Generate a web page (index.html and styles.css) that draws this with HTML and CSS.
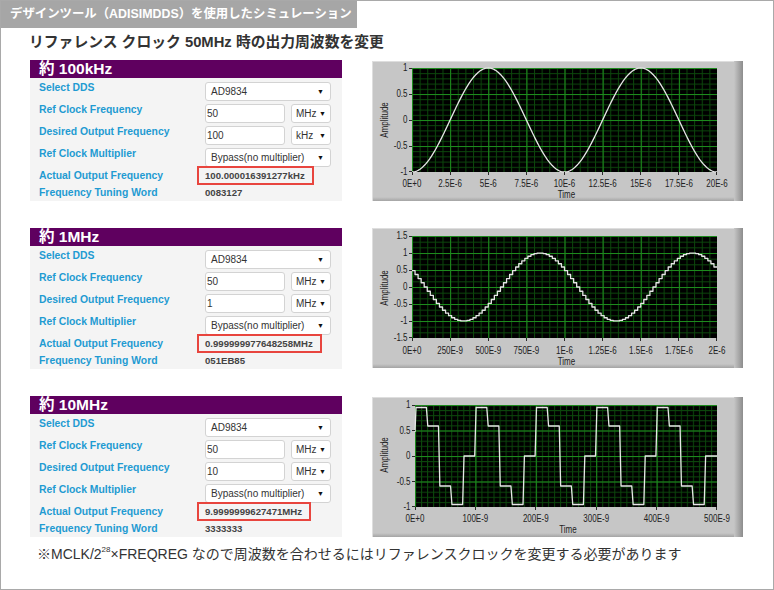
FILE: index.html
```html
<!DOCTYPE html>
<html lang="ja">
<head>
<meta charset="utf-8">
<title>ADISIMDDS シミュレーション</title>
<link rel="stylesheet" href="styles.css">
</head>
<body>
<div class="page">
  <div class="tab">デザインツール（ADISIMDDS）を使用したシミュレーション</div>
  <h1 class="title">リファレンス クロック 50MHz 時の出力周波数を変更</h1>

  <div class="sections">
    <!-- 100kHz -->
    <section class="sim">
      <div class="panel">
        <div class="panel-head">約 100kHz</div>
        <div class="panel-body">
          <div class="row">
            <span class="label">Select DDS</span>
            <div class="select wide"><span>AD9834</span><i class="arrow">▼</i></div>
          </div>
          <div class="row">
            <span class="label">Ref Clock Frequency</span>
            <div class="input">50</div>
            <div class="select unit"><span>MHz</span><i class="arrow">▼</i></div>
          </div>
          <div class="row">
            <span class="label">Desired Output Frequency</span>
            <div class="input">100</div>
            <div class="select unit"><span>kHz</span><i class="arrow">▼</i></div>
          </div>
          <div class="row">
            <span class="label">Ref Clock Multiplier</span>
            <div class="select wide"><span>Bypass(no multiplier)</span><i class="arrow">▼</i></div>
          </div>
          <div class="row result">
            <span class="label">Actual Output Frequency</span>
            <span class="value boxed">100.000016391277kHz</span>
          </div>
          <div class="row ftw">
            <span class="label">Frequency Tuning Word</span>
            <span class="value">0083127</span>
          </div>
        </div>
      </div>
      <div class="chart">
        <svg class="graph" width="371" height="140" viewBox="0 0 371 140">
          <defs>
            <linearGradient id="edge" x1="0" x2="1" y1="0" y2="0">
              <stop offset="0" stop-color="#c6c6c6"/>
              <stop offset="1" stop-color="#8d8d8d"/>
            </linearGradient>
            <linearGradient id="edgeB" x1="0" x2="0" y1="0" y2="1">
              <stop offset="0" stop-color="#c6c6c6"/>
              <stop offset="1" stop-color="#a4a4a4"/>
            </linearGradient>
            <pattern id="min1" x="40" y="7" width="7.625" height="5.2" patternUnits="userSpaceOnUse">
              <rect class="gmin" width="1" height="5.2"/><rect class="gmin" width="7.625" height="1"/>
            </pattern>
            <pattern id="maj1" x="40" y="7" width="38.125" height="26" patternUnits="userSpaceOnUse">
              <rect class="gmaj" width="1" height="26"/><rect class="gmaj" width="38.125" height="1"/>
            </pattern>
          </defs>
          <rect class="frame" width="371" height="140"/>
          <rect x="0" y="136" width="371" height="4" fill="url(#edgeB)"/>
          <rect x="362" y="0" width="9" height="140" fill="url(#edge)"/>
          <rect class="hl" width="362" height="1"/>
          <rect class="hl" width="1" height="140"/>
          <rect class="plotbg" x="40" y="7" width="305" height="104"/>
          <rect x="40" y="7" width="305" height="104" fill="url(#min1)"/>
          <rect x="40" y="7" width="305" height="104" fill="url(#maj1)"/>
          <path id="w1" class="wave" d="M40 111"/>
          <path class="tick" d="M37 7.5H40M37 33.5H40M37 59.5H40M37 85.5H40M37 110.5H40M40.5 111V114M78.5 111V114M116.5 111V114M154.5 111V114M192.5 111V114M230.5 111V114M268.5 111V114M306.5 111V114M344.5 111V114"/>
          <g class="ax yl">
            <text x="35.5" y="10.5">1</text>
            <text x="35.5" y="36.5">0.5</text>
            <text x="35.5" y="62.5">0</text>
            <text x="35.5" y="88.5">-0.5</text>
            <text x="35.5" y="114.5">-1</text>
          </g>
          <g class="ax xl">
            <text x="40" y="126">0E+0</text>
            <text x="78.1" y="126">2.5E-6</text>
            <text x="116.3" y="126">5E-6</text>
            <text x="154.4" y="126">7.5E-6</text>
            <text x="192.5" y="126">10E-6</text>
            <text x="230.6" y="126">12.5E-6</text>
            <text x="268.8" y="126">15E-6</text>
            <text x="306.9" y="126">17.5E-6</text>
            <text x="345" y="126">20E-6</text>
            <text x="194.5" y="137">Time</text>
          </g>
          <g class="ax xl" transform="translate(15.5 59) rotate(-90)"><text x="0" y="0">Amplitude</text></g>
        </svg>
      </div>
    </section>

    <!-- 1MHz -->
    <section class="sim">
      <div class="panel">
        <div class="panel-head">約 1MHz</div>
        <div class="panel-body">
          <div class="row">
            <span class="label">Select DDS</span>
            <div class="select wide"><span>AD9834</span><i class="arrow">▼</i></div>
          </div>
          <div class="row">
            <span class="label">Ref Clock Frequency</span>
            <div class="input">50</div>
            <div class="select unit"><span>MHz</span><i class="arrow">▼</i></div>
          </div>
          <div class="row">
            <span class="label">Desired Output Frequency</span>
            <div class="input">1</div>
            <div class="select unit"><span>MHz</span><i class="arrow">▼</i></div>
          </div>
          <div class="row">
            <span class="label">Ref Clock Multiplier</span>
            <div class="select wide"><span>Bypass(no multiplier)</span><i class="arrow">▼</i></div>
          </div>
          <div class="row result">
            <span class="label">Actual Output Frequency</span>
            <span class="value boxed">0.999999977648258MHz</span>
          </div>
          <div class="row ftw">
            <span class="label">Frequency Tuning Word</span>
            <span class="value">051EB85</span>
          </div>
        </div>
      </div>
      <div class="chart chart-mid">
        <svg class="graph" width="371" height="140" viewBox="0 0 371 140">
          <defs>
            <pattern id="min2" x="40" y="8" width="7.625" height="5.6667" patternUnits="userSpaceOnUse">
              <rect class="gmin" width="1" height="5.6667"/><rect class="gmin" width="7.625" height="1"/>
            </pattern>
            <pattern id="maj2" x="40" y="8" width="38.125" height="17" patternUnits="userSpaceOnUse">
              <rect class="gmaj" width="1" height="17"/><rect class="gmaj" width="38.125" height="1"/>
            </pattern>
          </defs>
          <rect class="frame" width="371" height="140"/>
          <rect x="0" y="136" width="371" height="4" fill="url(#edgeB)"/>
          <rect x="362" y="0" width="9" height="140" fill="url(#edge)"/>
          <rect class="hl" width="362" height="1"/>
          <rect class="hl" width="1" height="140"/>
          <rect class="plotbg" x="40" y="8" width="305" height="102"/>
          <rect x="40" y="8" width="305" height="102" fill="url(#min2)"/>
          <rect x="40" y="8" width="305" height="102" fill="url(#maj2)"/>
          <path id="w2" class="wave" d="M40 59"/>
          <path class="tick" d="M37 8.5H40M37 25.5H40M37 42.5H40M37 59.5H40M37 76.5H40M37 93.5H40M37 109.5H40M40.5 110V113M78.5 110V113M116.5 110V113M154.5 110V113M192.5 110V113M230.5 110V113M268.5 110V113M306.5 110V113M344.5 110V113"/>
          <g class="ax yl">
            <text x="35.5" y="11.5">1.5</text>
            <text x="35.5" y="28.5">1</text>
            <text x="35.5" y="45.5">0.5</text>
            <text x="35.5" y="62.5">0</text>
            <text x="35.5" y="79.5">-0.5</text>
            <text x="35.5" y="96.5">-1</text>
            <text x="35.5" y="113.5">-1.5</text>
          </g>
          <g class="ax xl">
            <text x="40" y="126.5">0E+0</text>
            <text x="78.1" y="126.5">250E-9</text>
            <text x="116.3" y="126.5">500E-9</text>
            <text x="154.4" y="126.5">750E-9</text>
            <text x="192.5" y="126.5">1E-6</text>
            <text x="230.6" y="126.5">1.25E-6</text>
            <text x="268.8" y="126.5">1.5E-6</text>
            <text x="306.9" y="126.5">1.75E-6</text>
            <text x="345" y="126.5">2E-6</text>
            <text x="194.5" y="137.5">Time</text>
          </g>
          <g class="ax xl" transform="translate(15.5 60) rotate(-90)"><text x="0" y="0">Amplitude</text></g>
        </svg>
      </div>
    </section>

    <!-- 10MHz -->
    <section class="sim">
      <div class="panel">
        <div class="panel-head">約 10MHz</div>
        <div class="panel-body">
          <div class="row">
            <span class="label">Select DDS</span>
            <div class="select wide"><span>AD9834</span><i class="arrow">▼</i></div>
          </div>
          <div class="row">
            <span class="label">Ref Clock Frequency</span>
            <div class="input">50</div>
            <div class="select unit"><span>MHz</span><i class="arrow">▼</i></div>
          </div>
          <div class="row">
            <span class="label">Desired Output Frequency</span>
            <div class="input">10</div>
            <div class="select unit"><span>MHz</span><i class="arrow">▼</i></div>
          </div>
          <div class="row">
            <span class="label">Ref Clock Multiplier</span>
            <div class="select wide"><span>Bypass(no multiplier)</span><i class="arrow">▼</i></div>
          </div>
          <div class="row result">
            <span class="label">Actual Output Frequency</span>
            <span class="value boxed">9.9999999627471MHz</span>
          </div>
          <div class="row ftw">
            <span class="label">Frequency Tuning Word</span>
            <span class="value">3333333</span>
          </div>
        </div>
      </div>
      <div class="chart">
        <svg class="graph" width="371" height="140" viewBox="0 0 371 140">
          <defs>
            <pattern id="min3" x="43" y="8" width="6.04" height="5.1" patternUnits="userSpaceOnUse">
              <rect class="gmin" width="1" height="5.1"/><rect class="gmin" width="6.04" height="1"/>
            </pattern>
            <pattern id="maj3" x="43" y="8" width="60.4" height="25.5" patternUnits="userSpaceOnUse">
              <rect class="gmaj" width="1" height="25.5"/><rect class="gmaj" width="60.4" height="1"/>
            </pattern>
          </defs>
          <rect class="frame" width="371" height="140"/>
          <rect x="0" y="136" width="371" height="4" fill="url(#edgeB)"/>
          <rect x="362" y="0" width="9" height="140" fill="url(#edge)"/>
          <rect class="hl" width="362" height="1"/>
          <rect class="hl" width="1" height="140"/>
          <rect class="plotbg" x="43" y="8" width="302" height="102"/>
          <rect x="43" y="8" width="302" height="102" fill="url(#min3)"/>
          <rect x="43" y="8" width="302" height="102" fill="url(#maj3)"/>
          <path id="w3" class="wave" d="M43 59"/>
          <path class="tick" d="M40 8.5H43M40 33.5H43M40 59.5H43M40 84.5H43M40 109.5H43M43.5 110V113M103.5 110V113M163.5 110V113M224.5 110V113M284.5 110V113M344.5 110V113"/>
          <g class="ax yl">
            <text x="38.5" y="11.5">1</text>
            <text x="38.5" y="37">0.5</text>
            <text x="38.5" y="62.5">0</text>
            <text x="38.5" y="88">-0.5</text>
            <text x="38.5" y="113.5">-1</text>
          </g>
          <g class="ax xl">
            <text x="43" y="125.5">0E+0</text>
            <text x="103.4" y="125.5">100E-9</text>
            <text x="163.8" y="125.5">200E-9</text>
            <text x="224.2" y="125.5">300E-9</text>
            <text x="284.6" y="125.5">400E-9</text>
            <text x="345" y="125.5">500E-9</text>
            <text x="196" y="136.5">Time</text>
          </g>
          <g class="ax xl" transform="translate(15.5 58) rotate(-90)"><text x="0" y="0">Amplitude</text></g>
        </svg>
      </div>
    </section>
  </div>

  <p class="note">※MCLK/2<sup>28</sup>×FREQREG なので周波数を合わせるにはリファレンスクロックを変更する必要があります</p>
</div>
<script src="script.js"></script>
</body>
</html>
```

FILE: styles.css
```css
* {
  box-sizing: border-box;
}

html,
body {
  margin: 0;
  padding: 0;
  background: #ffffff;
}

body {
  font-family: "Liberation Sans", "Noto Sans CJK JP", sans-serif;
  color: #333333;
}

.page {
  width: 774px;
  height: 590px;
  border: 1px solid #a9a9a9;
  overflow: hidden;
}

.tab {
  width: 357px;
  height: 28px;
  margin: -1px 0 0 -1px;
  padding-left: 10px;
  background: #a6a6a6;
  color: #ffffff;
  font-size: 12.4px;
  font-weight: bold;
  line-height: 28px;
  white-space: nowrap;
}

.title {
  margin: 5px 0 0 28px;
  font-size: 14.8px;
  line-height: 18px;
  font-weight: bold;
  color: #333333;
  white-space: nowrap;
}

.sections {
  display: flex;
  flex-direction: column;
  gap: 27px;
  margin: 9px 0 0 29px;
}

.sim {
  display: flex;
  align-items: flex-start;
  gap: 30px;
}

.panel {
  width: 312px;
  flex: none;
}

.panel-head {
  height: 18px;
  padding-left: 9px;
  background: #5f005f;
  color: #ffffff;
  font-size: 15.5px;
  font-weight: bold;
  line-height: 18px;
  white-space: nowrap;
}

.panel-body {
  background: #f4f4f4;
  padding: 4px 0 2px 9px;
}

.row {
  display: flex;
  align-items: flex-start;
  height: 22px;
}

.row.result {
  height: 17px;
}

.row.ftw {
  height: 12px;
}

.label {
  width: 166px;
  flex: none;
  color: #1f9bd2;
  font-size: 10.4px;
  font-weight: bold;
  line-height: 12px;
  white-space: nowrap;
}

.select,
.input {
  height: 19px;
  display: flex;
  align-items: center;
  background: #ffffff;
  border: 1px solid #d3d3d3;
  border-radius: 3px;
  color: #333333;
  font-size: 10px;
  white-space: nowrap;
}

.select {
  justify-content: space-between;
}

.select.wide {
  width: 126px;
  padding: 0 6px 0 5px;
}

.input {
  width: 80px;
  padding-left: 1px;
}

.select.unit {
  width: 40px;
  margin-left: 6px;
  padding: 0 4px 0 4px;
}

.arrow {
  font-style: normal;
  font-size: 7px;
  color: #111111;
}

.value {
  color: #444444;
  font-size: 9.6px;
  font-weight: bold;
  line-height: 12px;
  white-space: nowrap;
}

.value.boxed {
  height: 19px;
  margin: -4px 0 0 -8px;
  padding: 0 7px 0 6px;
  border: 2px solid #e8453e;
  line-height: 15px;
}

.chart {
  width: 371px;
  height: 140px;
  margin-top: 1px;
  flex: none;
}

.chart.chart-mid {
  margin-top: 0;
}

.graph {
  display: block;
}

.frame {
  fill: #c6c6c6;
}

.hl {
  fill: #dedede;
}

.plotbg {
  fill: #000000;
}

.gmin {
  fill: #0c470c;
}

.gmaj {
  fill: #1d8a1d;
}

.wave {
  fill: none;
  stroke: #e6e6e6;
  stroke-width: 1.3;
  stroke-linejoin: round;
}

.tick {
  fill: none;
  stroke: #2a2a2a;
  stroke-width: 1;
}

.ax {
  font-family: "Liberation Sans", sans-serif;
  font-size: 10px;
  fill: #222222;
}

.ax text {
  transform-box: fill-box;
  transform-origin: center;
  transform: scaleX(0.8);
}

.yl {
  text-anchor: end;
}

.yl text {
  transform-origin: right center;
}

.xl {
  text-anchor: middle;
}

.note {
  margin: 7px 0 0 36px;
  font-size: 14px;
  line-height: 20px;
  color: #333333;
  white-space: nowrap;
}

.note sup {
  font-size: 8px;
  line-height: 0;
  vertical-align: 7px;
}
```

FILE: script.js
```js
(function () {
  function yPos(v, top, h, lo, hi) {
    return top + (hi - v) / (hi - lo) * h;
  }

  // 100kHz: smooth cosine, 2 periods
  var x0 = 40, w = 305, top = 7, h = 104, i, v, d = '';
  for (i = 0; i <= 400; i++) {
    var f = i / 400;
    v = -Math.cos(4 * Math.PI * f);
    d += (i ? 'L' : 'M') + (x0 + f * w).toFixed(2) + ' ' + yPos(v, top, h, -1, 1).toFixed(2);
  }
  document.getElementById('w1').setAttribute('d', d);

  // 1MHz: 50MHz sampled staircase
  x0 = 40; w = 305; top = 8; h = 102;
  var n = 100, sw = w / n, yy;
  d = '';
  for (i = 0; i < n; i++) {
    v = Math.cos(2 * Math.PI * (i * 0.02 - 0.83));
    yy = yPos(v, top, h, -1.5, 1.5).toFixed(2);
    if (i === 0) {
      d = 'M' + x0 + ' ' + yy;
    } else {
      d += 'V' + yy;
    }
    d += 'H' + (x0 + (i + 1) * sw).toFixed(2);
  }
  document.getElementById('w2').setAttribute('d', d);

  // 10MHz: 5 samples per period
  x0 = 43; w = 302; top = 8; h = 102; n = 25; sw = w / n;
  d = 'M' + x0 + ' ' + yPos(0.47, top, h, -1, 1).toFixed(2);
  for (i = 0; i < n; i++) {
    v = Math.sin(2 * Math.PI * (i + 1) / 5);
    yy = yPos(v, top, h, -1, 1).toFixed(2);
    var xs = x0 + i * sw + (i === 0 ? 1 : 0.7);
    var xe = x0 + (i + 1) * sw - (i === n - 1 ? 0 : 0.7);
    d += 'L' + xs.toFixed(2) + ' ' + yy + 'H' + xe.toFixed(2);
  }
  document.getElementById('w3').setAttribute('d', d);
})();
```
